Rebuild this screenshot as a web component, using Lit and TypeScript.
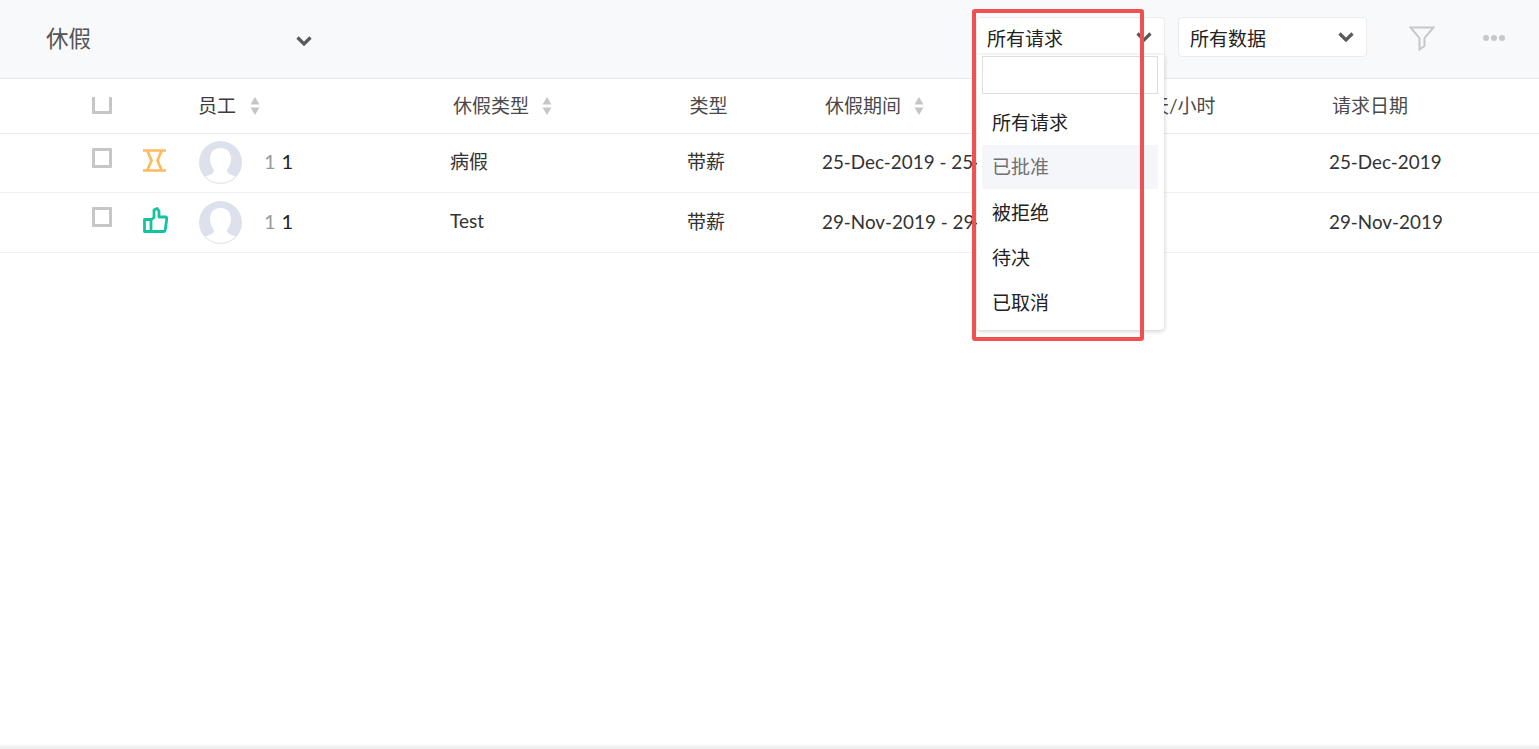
import { LitElement, html, css } from "lit";
import { customElement } from "lit/decorators.js";

const chevron = html`<svg class="chev" width="16" height="10" viewBox="0 0 16 10"><path d="M1.500 1.500 8 8l6.500-6.500" fill="none" stroke="#5a5a5a" stroke-width="3.200"/></svg>`;
const sort = html`<svg class="sort" width="10" height="18" viewBox="0 0 10 18"><path d="M5 0l4.500 7.500H.5zM5 18L.5 10.500h9z" fill="#c6c6c6"/></svg>`;
const avatar = html`<svg class="avatar" width="43" height="43" viewBox="0 0 43 43">
  <circle cx="21.5" cy="21.5" r="21.5" fill="#dde1ec"/>
  <clipPath id="c"><circle cx="21.5" cy="21.5" r="21"/></clipPath>
  <path clip-path="url(#c)" fill="#fff" d="M21.500 7C14 7 11 12 11 18c0 5 2.500 9 4 11 0 3-2 4-6 5.500-3 1-5 2.500-6 3.500v5h37v-5c-1-1-3-2.500-6-3.500-4-1.500-6-2.500-6-5.500 1.500-2 4-6 4-11 0-6-3-11-10.500-11z"/>
  <path d="M6 35.500A21 21 0 0 0 37 35.500" fill="none" stroke="#e6e6e6"/>
</svg>`;
const hourglass = html`<svg width="23" height="23" viewBox="0 0 23 23"><path d="M0 1.500h23M0 21.500h23M4.500 2l4 9.500-4 9.500M18.500 2l-4 9.500 4 9.500" fill="none" stroke="#ffb95e" stroke-width="2.700"/></svg>`;
const thumb = html`<svg width="25" height="26" viewBox="0 0 25 26"><path d="M1.500 12.500h6.500V24.500H1.500zM8 13l3-2.500V3l3-1.500L16 4v6h6.500c1 0 1.500.8 1.300 1.800l-1.600 11c-.1 1-.8 1.700-1.800 1.700H8" fill="none" stroke="#14c3a0" stroke-width="2.800" stroke-linejoin="round"/></svg>`;

const rows = [
  { icon: hourglass, type: "病假", pay: "带薪", period: "25-Dec-2019 - 25-Dec-2019", date: "25-Dec-2019" },
  { icon: thumb, type: "Test", pay: "带薪", period: "29-Nov-2019 - 29-Nov-2019", date: "29-Nov-2019" },
];
const options = ["所有请求", "已批准", "被拒绝", "待决", "已取消"];

@customElement("app-root")
export class AppRoot extends LitElement {
  static styles = css`
    :host { display: flex; flex-direction: column; height: 749px; overflow: hidden; position: relative; background: #fff;
      font-family: "Lato", "Noto Sans CJK SC", sans-serif; font-size: 19px; color: #222; }
    .bar { height: 78px; flex: none; display: flex; align-items: center; background: #f8f9fb; border-bottom: 1px solid #e6e8ea; padding: 0 34px 0 46px; }
    .title { width: 250px; font-size: 22.5px; color: #555; margin-top: -4px; }
    .bar > .chev { margin-top: 4px; }
    .selects { margin-left: auto; display: flex; gap: 13px; margin-top: -4px; }
    .select { position: relative; box-sizing: border-box; width: 189px; height: 40px; background: #fff; border: 1px solid #ebebec; border-radius: 4px; display: flex; align-items: center; justify-content: space-between; padding: 0 12px 0 10px; }
    .select.data { padding-left: 11px; }
    .menu { position: absolute; z-index: 2; left: 0; right: 0; top: 37px; height: 275px; box-sizing: border-box; background: #fff; border-radius: 0 0 4px 4px; box-shadow: 0 1px 5px rgba(0,0,0,.22); padding: 1px 6px 0 5px; }
    .search { box-sizing: border-box; height: 38px; border: 1px solid #dedede; margin-bottom: 6px; }
    .opt { box-sizing: border-box; height: 45px; display: flex; align-items: center; padding: 0 0 2px 10px; }
    .opt.on { background: #f5f6fa; color: #707070; height: 44px; margin-bottom: 1px; padding-bottom: 3px; }
    .filter { margin-left: 42px; margin-top: -1px; }
    .dots { margin-left: 48px; margin-top: -3px; }
    .row { display: grid; grid-template-columns: 51px 56px 251px 237px 135px 327px 180px 1fr; padding-left: 92px; align-items: center; border-bottom: 1px solid #f0f0f0; }
    .head { height: 54px; border-bottom-color: #e9e9e9; color: #4a4a4a; }
    .head > span { padding: 0 0 4px 3px; display: flex; align-items: center; }
    .head > span.emp { padding-left: 0; margin-left: -1px; color: #3c3c3c; }
    .head > span.emp .sort { margin-left: 14px; }
    .head > span.tight { padding-left: 2.5px; }
    .head > span.days { padding-left: 1px; }
    .sort { margin: 4px 0 0 13px; }
    .clip { height: 17px; overflow: hidden; display: flex; align-items: flex-end; width: 20px; margin-top: -1px; }
    .box { width: 20px; height: 20px; flex: none; box-sizing: border-box; border: 3px solid #c6c6c6; border-radius: 1px; }
    .body { height: 60px; box-sizing: border-box; padding-bottom: 1px; }
    .body.first { height: 59px; }
    .body > .box { margin-top: -10px; }
    .icon { display: flex; margin-top: -5px; }
    .emp-cell { display: flex; align-items: center; }
    .avatar { flex: none; margin-right: 22px; }
    .num { display: flex; gap: 6px; font-size: 20px; margin-bottom: 3px; }
    .num i { font-style: normal; color: #9b9b9b; }
    .cell { white-space: nowrap; color: #333; margin-bottom: 4px; }
    .date { font-size: 18.85px; margin-bottom: 2px; }
    .foot { margin-top: auto; height: 3px; background: #f0f0f0; box-shadow: 0 -1px 3px rgba(0,0,0,.05); }
    .mark { position: absolute; z-index: 3; left: 972px; top: 9px; width: 172px; height: 332px; box-sizing: border-box; border: 4px solid #f05050; border-radius: 3px; }
  `;

  render() {
    return html`
      <div class="bar">
        <span class="title">休假</span>${chevron}
        <div class="selects">
          <div class="select">
            <span>所有请求</span>${chevron}
            <div class="menu">
              <div class="search"></div>
              ${options.map((o, i) => html`<div class="opt ${i === 1 ? "on" : ""}">${o}</div>`)}
            </div>
          </div>
          <div class="select data"><span>所有数据</span>${chevron}</div>
        </div>
        <svg class="filter" width="26" height="25" viewBox="0 0 26 25"><path d="M1.500 1.500h23l-9 10.500v8l-5 3.500V12z" fill="none" stroke="#c8c8c8" stroke-width="2"/></svg>
        <svg class="dots" width="22" height="6" viewBox="0 0 22 6" fill="#c8c8c8"><circle cx="3" cy="3" r="3"/><circle cx="11" cy="3" r="3"/><circle cx="19" cy="3" r="3"/></svg>
      </div>
      <div class="row head">
        <div class="clip"><div class="box"></div></div>
        <div></div>
        <span class="emp">员工${sort}</span>
        <span>休假类型${sort}</span>
        <span class="tight">类型</span>
        <span>休假期间${sort}</span>
        <span class="days">天/小时</span>
        <span>请求日期</span>
      </div>
      ${rows.map((r, i) => html`
        <div class="row body ${i === 0 ? "first" : ""}">
          <div class="box"></div>
          <div class="icon">${r.icon}</div>
          <div class="emp-cell">${avatar}<div class="num"><i>1</i><span>1</span></div></div>
          <div class="cell">${r.type}</div>
          <div class="cell">${r.pay}</div>
          <div class="cell date">${r.period}</div>
          <div class="cell"></div>
          <div class="cell date">${r.date}</div>
        </div>`)}
      <div class="foot"></div>
      <div class="mark"></div>
    `;
  }
}
